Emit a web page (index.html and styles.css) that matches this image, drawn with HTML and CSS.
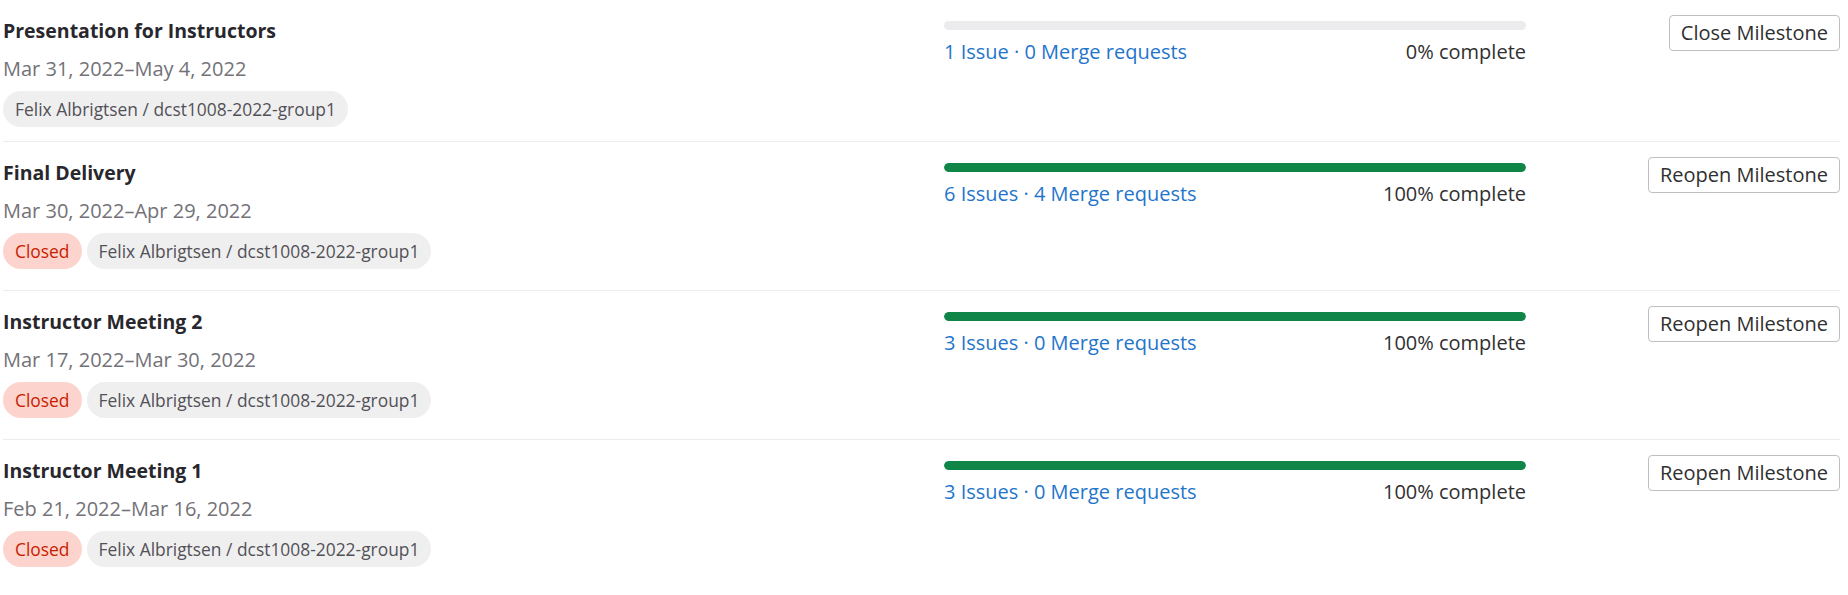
FILE: index.html
```html
<!DOCTYPE html>
<html lang="en">
<head>
<meta charset="utf-8">
<title>Milestones</title>
<link rel="stylesheet" href="styles.css">
</head>
<body>
<ul class="milestones">
  <li class="milestone">
    <div class="ms-info">
      <div class="ms-title">Presentation for Instructors</div>
      <div class="ms-dates">Mar 31, 2022–May 4, 2022</div>
      <div class="ms-badges"><span class="badge">Felix Albrigtsen / dcst1008-2022-group1</span></div>
    </div>
    <div class="ms-progress">
      <div class="bar"><div class="bar-fill" style="width:0%"></div></div>
      <div class="ms-stats">
        <span class="ms-links"><a href="#">1 Issue</a> · <a href="#">0 Merge requests</a></span>
        <span class="ms-percent">0% complete</span>
      </div>
    </div>
    <div class="ms-actions"><button class="btn">Close Milestone</button></div>
  </li>
  <li class="milestone is-closed">
    <div class="ms-info">
      <div class="ms-title">Final Delivery</div>
      <div class="ms-dates">Mar 30, 2022–Apr 29, 2022</div>
      <div class="ms-badges"><span class="badge badge-closed">Closed</span><span class="badge">Felix Albrigtsen / dcst1008-2022-group1</span></div>
    </div>
    <div class="ms-progress">
      <div class="bar"><div class="bar-fill" style="width:100%"></div></div>
      <div class="ms-stats">
        <span class="ms-links"><a href="#">6 Issues</a> · <a href="#">4 Merge requests</a></span>
        <span class="ms-percent">100% complete</span>
      </div>
    </div>
    <div class="ms-actions"><button class="btn">Reopen Milestone</button></div>
  </li>
  <li class="milestone is-closed">
    <div class="ms-info">
      <div class="ms-title">Instructor Meeting 2</div>
      <div class="ms-dates">Mar 17, 2022–Mar 30, 2022</div>
      <div class="ms-badges"><span class="badge badge-closed">Closed</span><span class="badge">Felix Albrigtsen / dcst1008-2022-group1</span></div>
    </div>
    <div class="ms-progress">
      <div class="bar"><div class="bar-fill" style="width:100%"></div></div>
      <div class="ms-stats">
        <span class="ms-links"><a href="#">3 Issues</a> · <a href="#">0 Merge requests</a></span>
        <span class="ms-percent">100% complete</span>
      </div>
    </div>
    <div class="ms-actions"><button class="btn">Reopen Milestone</button></div>
  </li>
  <li class="milestone is-closed">
    <div class="ms-info">
      <div class="ms-title">Instructor Meeting 1</div>
      <div class="ms-dates">Feb 21, 2022–Mar 16, 2022</div>
      <div class="ms-badges"><span class="badge badge-closed">Closed</span><span class="badge">Felix Albrigtsen / dcst1008-2022-group1</span></div>
    </div>
    <div class="ms-progress">
      <div class="bar"><div class="bar-fill" style="width:100%"></div></div>
      <div class="ms-stats">
        <span class="ms-links"><a href="#">3 Issues</a> · <a href="#">0 Merge requests</a></span>
        <span class="ms-percent">100% complete</span>
      </div>
    </div>
    <div class="ms-actions"><button class="btn">Reopen Milestone</button></div>
  </li>
</ul>
</body>
</html>
```

FILE: styles.css
```css
* { box-sizing: border-box; }

html, body {
  margin: 0;
  padding: 0;
  background: #ffffff;
  font-family: "Open Sans", "Noto Sans", "Liberation Sans", sans-serif;
  color: #303030;
}

.milestones {
  list-style: none;
  margin: 0;
  padding: 0 8px 0 3px;
}

.milestone {
  display: grid;
  grid-template-columns: 896px 582px 1fr;
  column-gap: 45px;
  padding: 15px 0 14px;
  border-bottom: 1px solid #ececef;
}

.milestone.is-closed {
  padding-bottom: 21px;
}

.milestone:last-child {
  border-bottom: none;
}

.ms-title {
  font-size: 19.5px;
  font-weight: 700;
  line-height: 32px;
  color: #28272d;
}

.ms-dates {
  margin-top: 8px;
  font-size: 20px;
  line-height: 28px;
  color: #737278;
}

.ms-badges {
  display: flex;
  gap: 5px;
  margin-top: 8px;
}

.badge {
  display: inline-flex;
  align-items: center;
  height: 36px;
  padding: 0 12px;
  border-radius: 18px;
  background: #efefef;
  color: #535158;
  font-size: 17.4px;
  white-space: nowrap;
}

.badge-closed {
  background: #fdd4cd;
  color: #c91c00;
}

.ms-progress {
  padding-top: 6px;
}

.bar {
  height: 9px;
  border-radius: 5px;
  background: #ececef;
  overflow: hidden;
}

.bar-fill {
  height: 100%;
  background: #108548;
  border-radius: 5px;
}

.ms-stats {
  display: flex;
  justify-content: space-between;
  margin-top: 8px;
  font-size: 20px;
  line-height: 28px;
}

.ms-links {
  color: #1f75cb;
}

.ms-links a {
  color: #1f75cb;
  text-decoration: none;
}

.ms-percent {
  color: #303030;
}

.ms-actions {
  display: flex;
  justify-content: flex-end;
  align-items: flex-start;
}

.btn {
  height: 36px;
  padding: 0 11px;
  border: 1px solid #bfbfc3;
  border-radius: 4px;
  background: #ffffff;
  color: #303030;
  font-family: inherit;
  font-size: 20px;
  line-height: 34px;
  cursor: pointer;
}
```
